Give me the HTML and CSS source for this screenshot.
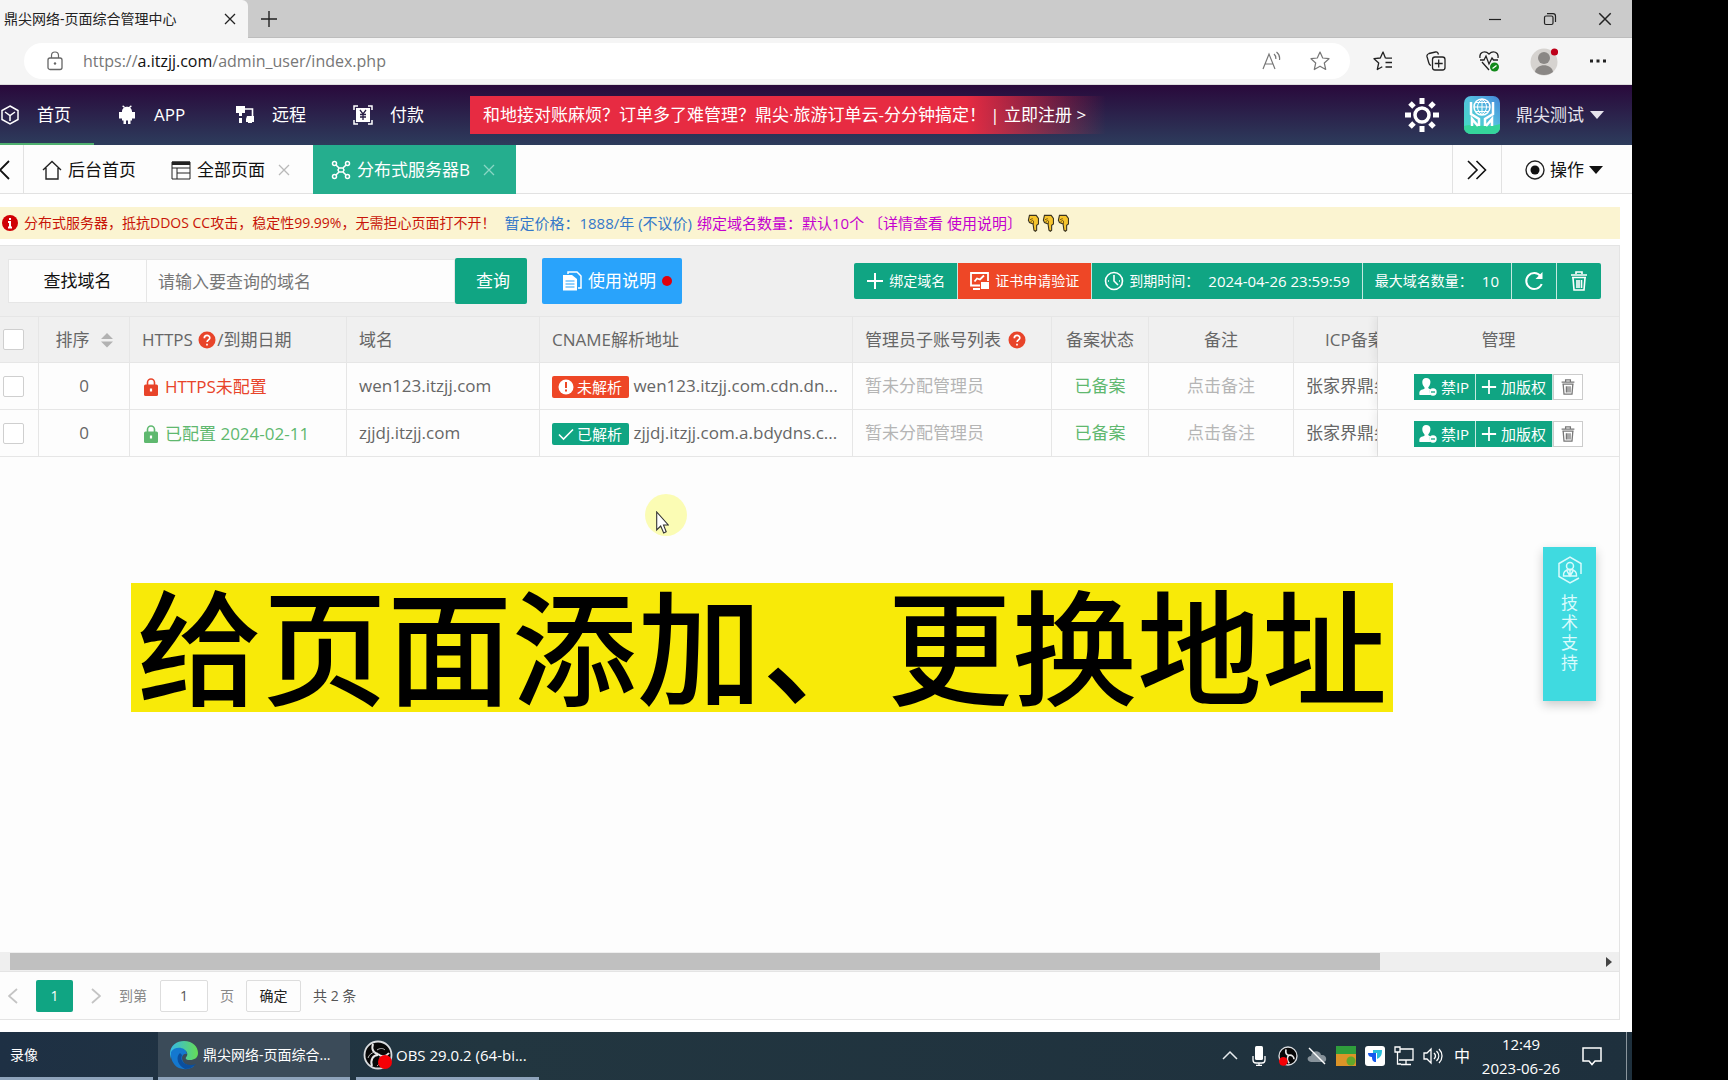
FILE: index.html
```html
<!DOCTYPE html>
<html lang="zh-CN">
<head>
<meta charset="utf-8">
<title>鼎尖网络-页面综合管理中心</title>
<link rel="stylesheet" href="styles.css">
</head>
<body>
<svg class="defs" aria-hidden="true">
  <symbol id="close" viewBox="0 0 14 14"><path d="M2 2l10 10M12 2L2 12" fill="none" stroke="currentColor" stroke-width="1.3"/></symbol>
  <symbol id="plus" viewBox="0 0 18 18"><path d="M9 1v16M1 9h16" fill="none" stroke="currentColor" stroke-width="2"/></symbol>
  <symbol id="trash" viewBox="0 0 20 20"><path d="M7 3V1h6v2M2 4h16M3 6.500h14M4 7l1 12h10l1-12M8 9v8M10 9v8M12.500 9v8" fill="none" stroke="currentColor" stroke-width="1.600"/></symbol>
  <symbol id="question" viewBox="0 0 18 18"><circle cx="9" cy="9" r="8.500" fill="#e8442a"/><path d="M6.300 7.200c0-3.700 5.500-3.500 5.500-.3 0 2-2.700 2-2.700 4.100M9 12.800v1.800" fill="none" stroke="#fff" stroke-width="1.700"/></symbol>
  <symbol id="lock" viewBox="0 0 14 20"><path d="M3.500 9V5.500a3.500 3.500 0 0 1 7 0V9" fill="none" stroke="currentColor" stroke-width="1.600"/><rect y="7.500" width="14" height="11.500" rx="1.500" fill="currentColor"/><path d="M7 11.500v3" stroke="#fff" stroke-width="2.200"/></symbol>
  <symbol id="user" viewBox="0 0 18 20"><path d="M7 1c6 0 5 6.500 2.500 9-.8 1 .2 1.800 1.700 2.300-1 1.700-.7 4 .5 5.700H.5C0 14 1 13 5 12c1-.5.800-1.500 0-2.300C2.500 7 2.500 1 7 1z" fill="currentColor"/><circle cx="14" cy="15" r="3.700" fill="currentColor"/><path d="M12 15h4" stroke="#10a583" stroke-width="1.300"/></symbol>
  <symbol id="hand" viewBox="0 0 13 20"><path d="M2 1.500h7.500L12 5v6l-2 1.500V18l-1.500 1.200L7 18l-1-7-4-1.500L.8 7z" fill="#f7c52d" stroke="#3a3320" stroke-width="1.200"/><path d="M2.500 6.500l3-1.500M3 9l3-2.500M6.500 11V7.500" fill="none" stroke="#6e5412" stroke-width="1"/></symbol>
  <symbol id="obs" viewBox="0 0 30 30"><circle cx="15" cy="15" r="13.500" fill="#070707" stroke="#d9dcdf" stroke-width="1.800"/><path d="M10 4c-2 6 1 9 5 10M15 15c-5 0-8 5-6 11M15 14c3 3 8 3 11-1" fill="none" stroke="#e6e6e6" stroke-width="2"/><path d="M14 10c3-2 6-2 8 0M12 12c-4 1-6 3-7 6M17 17c1 4 0 7-3 9" fill="none" stroke="#bbb" stroke-width="1"/><circle cx="22" cy="22" r="7" fill="#f50006"/></symbol>
</svg>
<div class="stage">
<div class="screen">

<header class="browser">
  <div class="titlebar">
    <div class="browser-tab"><span>鼎尖网络-页面综合管理中心</span><button aria-label="关闭标签页"><svg width="14" height="14"><use href="#close"/></svg></button></div>
    <button class="new-tab" aria-label="新建标签页"><svg width="18" height="18" viewBox="0 0 18 18"><path d="M9 1v16M1 9h16" fill="none" stroke="currentColor" stroke-width="1.400"/></svg></button>
    <div class="window-controls">
      <button aria-label="最小化"><svg width="14" height="14" viewBox="0 0 14 14"><path d="M1 7.500h12" stroke="#222" stroke-width="1.200"/></svg></button>
      <button aria-label="还原"><svg width="14" height="14" viewBox="0 0 14 14"><rect x="1.500" y="4" width="8.500" height="8.500" rx="1.500" fill="none" stroke="#222" stroke-width="1.200"/><path d="M4 1.700h6a2.500 2.500 0 0 1 2.500 2.500V10" fill="none" stroke="#222" stroke-width="1.200"/></svg></button>
      <button aria-label="关闭"><svg width="16" height="16"><use href="#close"/></svg></button>
    </div>
  </div>
  <div class="toolbar">
    <div class="address">
      <svg width="16" height="20" viewBox="0 0 16 20"><path d="M4.500 7V4.500a3.500 3.500 0 0 1 7 0V7" fill="none" stroke="#666" stroke-width="1.200"/><rect x="1" y="7" width="14" height="11.500" rx="2" fill="none" stroke="#666" stroke-width="1.300"/><circle cx="8" cy="12.500" r="1.200" fill="#666"/></svg>
      <p class="url">https://<b>a.itzjj.com</b>/admin_user/index.php</p>
      <button aria-label="朗读"><svg width="20" height="20" viewBox="0 0 20 20" fill="none" stroke="#777" stroke-width="1.200"><path d="M1 18L7 3l6 15M3.300 13h7.500M12 3c1.500 1.300 2 3 1.800 5M14.500 1c2.500 2 3.500 5 3 8"/></svg></button>
      <button aria-label="收藏"><svg width="20" height="20" viewBox="0 0 20 20" fill="none" stroke="#777" stroke-width="1.200" stroke-linejoin="round"><path d="M10 1l2.700 6 6.300.7-4.700 4.300 1.400 6.500L10 15.200 4.300 18.500 5.700 12 1 7.700 7.300 7z"/></svg></button>
    </div>
    <button aria-label="收藏夹"><svg width="20" height="20" viewBox="0 0 20 20" fill="none" stroke="#222" stroke-width="1.300" stroke-linejoin="round"><path d="M12.500 7.200L10 1 7.300 7 1 7.700 5.700 12 4.300 18.500l5-2.800M12.500 7.200H19M12.500 11.500H19M12.500 16H19"/></svg></button>
    <button aria-label="集锦"><svg width="20" height="20" viewBox="0 0 20 20" fill="none" stroke="#222" stroke-width="1.300"><rect x="6.500" y="6" width="12.500" height="13" rx="2.500"/><path d="M12.700 8.500v8M8.700 12.500h8M5 14.500c-1.500-.5-2-1.500-2.300-3L1 5.500C.7 4 1.500 3 3 2.500L9.500 1c1.500-.3 2.500.5 3 2.500"/></svg></button>
    <button aria-label="浏览器概要"><svg width="20" height="22" viewBox="0 0 20 22" fill="none" stroke="#222" stroke-width="1.300"><path d="M1 8C0 2 6 0 10 4c4-4 10-2 9 4M1 10h4l2-4 3 8 3-6 1.500 2H19M3 12l7 8"/><circle cx="15.500" cy="17" r="4.500" fill="#128a1a" stroke="none"/><path d="M13.500 18.500l4-3" stroke="#fff"/></svg></button>
    <button class="profile" aria-label="个人资料"><svg width="28" height="30" viewBox="0 0 28 30"><circle cx="14" cy="16" r="13.500" fill="#d6d3d0"/><circle cx="14" cy="12" r="6" fill="#8a8785"/><path d="M5 26c1-9 17-9 18 0-5 4-13 4-18 0z" fill="#8a8785"/><circle cx="24.500" cy="6" r="3.600" fill="#bd0019"/></svg></button>
    <button aria-label="更多"><svg width="18" height="4" viewBox="0 0 18 4"><path d="M1 .5h3v3H1zM7.500.5h3v3h-3zM14 .5h3v3h-3z" fill="#222"/></svg></button>
  </div>
</header>

<nav class="main-nav">
  <a class="current" href="#home"><svg width="20" height="20" viewBox="0 0 20 20" fill="none" stroke="#fff" stroke-width="1.500"><path d="M10 1l8 4.500v9L10 19l-8-4.500v-9zM5 7l5 3.500L15 7M10 10.500V16"/></svg>首页</a>
  <a href="#app"><svg width="20" height="20" viewBox="0 0 20 20" fill="#fff"><path d="M5 6.500c0-6.500 10-6.500 10 0zM5 6h10v9.500H5zM2 7h3v6.500H2zM15 7h3v6.500h-3zM6.500 15h2.500v4H6.500zM11 15h2.500v4H11zM5 1l2 2 1-1-1.500-1.500zM15 1l-2 2-1-1L13.500.5z"/></svg>APP</a>
  <a href="#remote"><svg width="20" height="20" viewBox="0 0 20 20"><path d="M1 1h9v7H7v3H4V8H1zM12 11h7v6h-2v1h-4v-1h-2v-3z" fill="#fff"/><path d="M10 4h7.500v7" fill="none" stroke="#fff" stroke-width="1.600"/><path d="M4 13h3v5H4z" fill="#fff"/></svg>远程</a>
  <a href="#pay"><svg width="20" height="20" viewBox="0 0 20 20"><rect x="3" y="3" width="14" height="14" fill="#fff"/><path d="M1 5V1h4M15 1h4v4M1 15v4h4M15 19h4v-4" fill="none" stroke="#fff" stroke-width="1.500"/><path d="M7 5l3 4 3-4M10 9v6M7 9.500h6M7 12h6" fill="none" stroke="#2a2048" stroke-width="1.300"/></svg>付款</a>
  <a class="promo" href="#promo">和地接对账麻烦？订单多了难管理？鼎尖·旅游订单云-分分钟搞定！ | 立即注册 &gt;</a>
  <div class="account">
    <button aria-label="主题"><svg width="36" height="36" viewBox="0 0 36 36" fill="none" stroke="#fff"><circle cx="18" cy="18" r="7" stroke-width="3.500"/><g stroke-width="5"><path d="M18 1v6M18 29v6M1 18h6M29 18h6M6 6l4 4M26 26l4 4M30 6l-4 4M10 26l-4 4"/></g></svg></button>
    <svg class="logo" width="36" height="38" viewBox="0 0 36 38"><defs><linearGradient id="lg" x1="0" x2="1" y1="1" y2="0"><stop stop-color="#41dfbd"/><stop offset=".55" stop-color="#55bfe0"/><stop offset="1" stop-color="#4586d8"/></linearGradient></defs><rect width="36" height="38" rx="7" fill="url(#lg)"/><path d="M0 30c10-3 20 3 36-2v4a7 6 0 0 1-7 6H7a7 6 0 0 1-7-6z" fill="#35d49b"/><g fill="none" stroke="#fff"><circle cx="18" cy="11" r="8" stroke-width="1.500"/><path d="M10 11h16M12 6.500h12M12 15.500h12M18 3v16M18 3c-6 5-6 11 0 16M18 3c6 5 6 11 0 16"/><path d="M7 6v12l8 5v7M29 6v12l-8 5v7M8 30v-7l6 7M28 30v-7l-6 7" stroke-width="2.500"/></g></svg>
    <button class="user-menu">鼎尖测试<i class="caret"></i></button>
  </div>
</nav>

<div class="page-tabs">
  <button class="scroll-left" aria-label="向左"><svg width="10" height="20" viewBox="0 0 10 20"><path d="M9 1L0 10l9 9" fill="none" stroke="#111" stroke-width="1.800"/></svg></button>
  <a href="#dash"><svg width="20" height="20" viewBox="0 0 20 20"><path d="M1 10l9-8.500 9 8.500M4 8v11h12V8" fill="none" stroke="#222" stroke-width="1.400"/></svg>后台首页</a>
  <a href="#pages"><svg width="20" height="20" viewBox="0 0 20 20"><path d="M1 2h18v17H1zM1 8h18M6 8v11M6 13h13" fill="none" stroke="#222" stroke-width="1"/><path d="M1 1.500h18v3.500H1z" fill="#222"/></svg>全部页面<svg class="tab-close" width="14" height="14"><use href="#close"/></svg></a>
  <a class="active" href="#servers"><svg width="20" height="20" viewBox="0 0 20 20" fill="none" stroke="#fff" stroke-width="1.500"><circle cx="3.500" cy="3.500" r="2"/><circle cx="16.500" cy="3.500" r="2"/><circle cx="3.500" cy="16.500" r="2"/><circle cx="16.500" cy="16.500" r="2"/><path d="M5 5l3 3h4l3-3M5 15l3-3h4l3 3M8 8l-1 2 1 2M12 8l1 2-1 2"/></svg>分布式服务器B<svg class="tab-close" width="14" height="14"><use href="#close"/></svg></a>
  <button class="scroll-right" aria-label="向右"><svg width="20" height="20" viewBox="0 0 20 20"><path d="M1 1l9 9-9 9M9.500 1l9 9-9 9" fill="none" stroke="#111" stroke-width="1.600"/></svg></button>
  <button class="actions"><svg width="20" height="20" viewBox="0 0 20 20"><circle cx="10" cy="10" r="9" fill="none" stroke="#222" stroke-width="1.400"/><circle cx="10" cy="10" r="4.500" fill="#111"/></svg>操作<i class="caret"></i></button>
</div>

<main>
  <p class="notice"><svg width="16" height="16" viewBox="0 0 16 16"><circle cx="8" cy="8" r="8" fill="#d00004"/><path d="M8 3v2M6 7h2v5M6 12.500h4" fill="none" stroke="#fff" stroke-width="2"/></svg><span class="warn">分布式服务器，抵抗DDOS CC攻击，稳定性99.99%，无需担心页面打不开！</span><span class="price">暂定价格：1888/年 (不议价)</span><span class="quota">绑定域名数量：默认10个 〔<a href="#detail">详情查看</a> <a href="#guide">使用说明</a>〕</span><svg width="44" height="18" viewBox="0 0 44 18"><use href="#hand" x="0" width="13" height="18"/><use href="#hand" x="15" width="13" height="18"/><use href="#hand" x="30" width="13" height="18"/></svg></p>

  <section class="card">
    <form class="filters">
      <label for="domain">查找域名</label><input id="domain" type="text" placeholder="请输入要查询的域名"><button class="search" type="button">查询</button>
      <button class="guide" type="button"><svg width="20" height="20" viewBox="0 0 20 20"><path d="M6 3V1h9l4 4v12h-3" fill="none" stroke="#fff" stroke-width="1.500"/><path d="M1 4h9l5 4v11.500H1z" fill="#fff"/><path d="M3.500 10h9M3.500 13h9M3.500 16h9" stroke="#29a3fb"/></svg>使用说明<i class="dot"></i></button>
      <div class="button-group">
        <button type="button"><svg width="18" height="18"><use href="#plus"/></svg>绑定域名</button>
        <button class="danger" type="button"><svg width="20" height="20" viewBox="0 0 20 20"><path d="M10 14.500H1V2h17v8M4.500 10.500L7 7.500l3 1 4-4M3 18h7" fill="none" stroke="#fff" stroke-width="1.800"/><path d="M11 11h8v7h-8z" fill="#fff"/></svg>证书申请验证</button>
        <button type="button"><svg width="20" height="20" viewBox="0 0 20 20" fill="none" stroke="#fff" stroke-width="1.600"><circle cx="10" cy="10" r="8.500"/><path d="M10 4v6l4 4M4 10h1M15 10h1" /></svg>到期时间：<span class="value">2024-04-26 23:59:59</span></button>
        <button type="button">最大域名数量：<span class="value">10</span></button>
        <button type="button" aria-label="刷新"><svg width="20" height="20" viewBox="0 0 20 20"><path d="M16.500 5a8 8 0 1 0 1.200 8" fill="none" stroke="#fff" stroke-width="2"/><path d="M18.500 1v7h-7z" fill="#fff"/></svg></button>
        <button type="button" aria-label="回收站"><svg width="20" height="20"><use href="#trash"/></svg></button>
      </div>
    </form>

    <table>
      <colgroup><col class="c-check"><col class="c-sort"><col class="c-https"><col class="c-domain"><col class="c-cname"><col class="c-admin"><col class="c-state"><col class="c-note"><col class="c-icp"><col class="c-manage"></colgroup>
      <thead><tr>
        <th><input type="checkbox" aria-label="全选"></th>
        <th class="center"><span class="cell sort">排序<svg width="12" height="16" viewBox="0 0 12 16"><path d="M0 7l6-6 6 6zM0 9.500h12l-6 6z" fill="#b2b2b2"/></svg></span></th>
        <th><span class="cell tight">HTTPS&nbsp;<svg width="18" height="18"><use href="#question"/></svg>/到期日期</span></th>
        <th>域名</th><th>CNAME解析地址</th>
        <th><span class="cell">管理员子账号列表<svg width="18" height="18"><use href="#question"/></svg></span></th>
        <th class="center">备案状态</th><th class="center">备注</th><th class="icp-head">ICP备案</th><th class="center fixed">管理</th>
      </tr></thead>
      <tbody>
      <tr>
        <td><input type="checkbox" aria-label="选择 wen123.itzjj.com"></td><td class="center">0</td>
        <td><span class="cell red"><svg width="14" height="20"><use href="#lock"/></svg>HTTPS未配置</span></td>
        <td>wen123.itzjj.com</td>
        <td class="cname"><span class="badge bad"><svg width="16" height="16" viewBox="0 0 16 16"><circle cx="8" cy="8" r="7.500" fill="#fff"/><path d="M8 3v6M8 10.500v2" stroke="#ee4726" stroke-width="2"/></svg>未解析</span> wen123.itzjj.com.cdn.dn...</td>
        <td class="muted">暂未分配管理员</td><td class="center green">已备案</td><td class="center muted">点击备注</td><td class="icp">张家界鼎尖</td>
        <td class="center fixed"><div class="row-actions"><button><svg width="18" height="20"><use href="#user"/></svg>禁IP</button><button><svg width="16" height="16"><use href="#plus"/></svg>加版权</button><button class="del" aria-label="删除"><svg width="16" height="18"><use href="#trash"/></svg></button></div></td>
      </tr>
      <tr>
        <td><input type="checkbox" aria-label="选择 zjjdj.itzjj.com"></td><td class="center">0</td>
        <td><span class="cell green"><svg width="14" height="20"><use href="#lock"/></svg>已配置 2024-02-11</span></td>
        <td>zjjdj.itzjj.com</td>
        <td class="cname"><span class="badge good"><svg width="16" height="16" viewBox="0 0 16 16"><path d="M1 8.500l4.500 4.500L15 3.500" fill="none" stroke="#fff" stroke-width="1.600"/></svg>已解析</span> zjjdj.itzjj.com.a.bdydns.c...</td>
        <td class="muted">暂未分配管理员</td><td class="center green">已备案</td><td class="center muted">点击备注</td><td class="icp">张家界鼎尖</td>
        <td class="center fixed"><div class="row-actions"><button><svg width="18" height="20"><use href="#user"/></svg>禁IP</button><button><svg width="16" height="16"><use href="#plus"/></svg>加版权</button><button class="del" aria-label="删除"><svg width="16" height="18"><use href="#trash"/></svg></button></div></td>
      </tr>
      </tbody>
    </table>

    <div class="hscroll"><i class="thumb"></i><i class="arrow"></i></div>
    <div class="pager">
      <button class="step" aria-label="上一页"><svg width="10" height="16" viewBox="0 0 10 16"><path d="M9 1L1 8l8 7" fill="none" stroke="#c4c4c4" stroke-width="1.800"/></svg></button>
      <button class="page">1</button>
      <button class="step" aria-label="下一页"><svg width="10" height="16" viewBox="0 0 10 16"><path d="M1 1l8 7-8 7" fill="none" stroke="#c4c4c4" stroke-width="1.800"/></svg></button>
      <label for="goto">到第</label><input id="goto" type="text" value="1"><span>页</span><button class="confirm">确定</button><span class="total">共 2 条</span>
    </div>
  </section>
</main>

<footer class="taskbar">
  <button class="task first">录像</button>
  <button class="task focus"><svg width="28" height="30" viewBox="0 0 28 30"><defs><linearGradient id="eg" x1="0" x2="1"><stop stop-color="#35b8e8"/><stop offset="1" stop-color="#65dc55"/></linearGradient></defs><path d="M0 14C0 5 7 1 14 1c9 0 14 6 14 12 0 5-4 7-8 7-5 0-5-2-3-4 2-5-5-8-9-6-4 1-7 5-7 9z" fill="url(#eg)"/><path d="M1 12c3-6 15-6 16 2-7-2-8 13 7 12-4 4-12 4-17 1-4-3-7-9-6-15z" fill="#1478cf"/><path d="M10 13c-5 4-2 13 5 16 5 0 8-2 11-5-9 3-17-2-14-9z" fill="#0b4f9e"/></svg>鼎尖网络-页面综合...</button>
  <button class="task obs"><svg width="30" height="30"><use href="#obs"/></svg>OBS 29.0.2 (64-bi...</button>
  <div class="tray">
    <svg width="20" height="20" viewBox="0 0 20 20"><path d="M3 13l7-7 7 7" fill="none" stroke="#e8ecef" stroke-width="1.500"/></svg>
    <svg width="20" height="20" viewBox="0 0 20 20"><rect x="6" y="0" width="8" height="14" rx="1.500" fill="#fff"/><path d="M4 10v4c0 2 1 3 3 3h6c2 0 3-1 3-3v-4M10 17v2.500M7 19.300h6" fill="none" stroke="#fff" stroke-width="1.300"/></svg>
    <svg width="20" height="20" viewBox="0 0 30 30"><circle cx="15" cy="15" r="13.500" fill="#070707" stroke="#d9dcdf" stroke-width="2"/><path d="M12 5c-1 5 0 8 4 9M16 14c5-1 8 2 8 6M16 14c-3 4-2 9 1 12" fill="none" stroke="#e6e6e6" stroke-width="2.500"/><circle cx="8" cy="23" r="6.500" fill="#f50006"/></svg>
    <svg width="20" height="20" viewBox="0 0 20 20"><path d="M4 16c-5-1-4-6 0-6 1-6 9-6 10-1 6-1 7 7 2 7z" fill="#87929a"/><path d="M2 2l16 16" stroke="#fff" stroke-width="1.400"/></svg>
    <svg width="20" height="20" viewBox="0 0 20 20"><path d="M0 0h20v9H0z" fill="#2f9e3c"/><path d="M0 8h20v12H0z" fill="#dc9428"/><circle cx="15" cy="15" r="4.500" fill="#63a72b"/></svg>
    <svg width="20" height="20" viewBox="0 0 20 20"><rect width="20" height="20" rx="3" fill="#fff"/><path d="M3 7h8v9c-3 0-4-2-4-5-2 0-4-1-4-4z" fill="#1559ee"/><path d="M8 4h9c0 5-1 7-5 9V7H8z" fill="#28bedb"/></svg>
    <svg width="20" height="20" viewBox="0 0 20 20" fill="none" stroke="#fff" stroke-width="1.300"><path d="M6 3h13v11H5M12 14v4M7 18.500h10M1 1h5v5H1zM3.500 6v12H7"/></svg>
    <svg width="20" height="20" viewBox="0 0 20 20" fill="none" stroke="#fff" stroke-width="1.300"><path d="M1 7h3l4-4v14l-4-4H1zM11 7c2 2 2 4 0 6M13.500 5c3 3 3 7 0 10M16 3c4 4 4 10 0 14"/></svg>
    <span class="ime">中</span>
  </div>
  <time class="clock"><span>12:49</span><span>2023-06-26</span></time>
  <button class="notify" aria-label="通知"><svg width="20" height="20" viewBox="0 0 20 20"><path d="M1 2h18v13h-6l-3 3.500L7 15H1z" fill="none" stroke="#fff" stroke-width="1.500"/></svg></button>
</footer>

<button class="support"><svg width="26" height="28" viewBox="0 0 26 28" fill="none" stroke="#d9fbfc" stroke-width="1.500"><path d="M24 18V7.500L13 1 2 7.500v13L13 27l9-5"/><circle cx="13" cy="10" r="3.500"/><path d="M13 13.500c-5 0-7 3-6.500 6.500h13c.5-3.500-1.500-6.500-6.500-6.500zM13 14v5M10 15l3 5 3-5"/></svg><span>技术支持</span></button>
<i class="pointer-glow"></i>
<svg class="pointer" width="13" height="23" viewBox="0 0 13 23"><path d="M.7 1v18l4-4 3 7 2.500-1.200L7.500 14h4.800z" fill="#fff" stroke="#333" stroke-width="1.100"/></svg>
<div class="caption">给页面添加、更换地址</div>
</div>
</div>
</body>
</html>
```
FILE: styles.css
```css
* { box-sizing: border-box; }
body { margin: 0; background: #000; color: #666; font: 16px/24px "Open Sans", "Noto Sans CJK SC", sans-serif; }
p { margin: 0; }
a { color: inherit; text-decoration: none; }
button, input { font: inherit; color: inherit; margin: 0; }
button { display: flex; align-items: center; justify-content: center; border: 0; padding: 0; background: none; white-space: nowrap; }
svg { display: block; flex: none; }
.defs { position: absolute; width: 0; height: 0; }
.caret { border: 7px solid transparent; border-top: 8px solid currentColor; border-bottom: 0; }

/* the right eighteenth of the window is left dark */
.stage { display: grid; grid-template-columns: 17fr 1fr; min-height: 100vh; }
.screen { position: relative; display: flex; flex-direction: column; min-width: 0; overflow: hidden; background: #fff; }

/* browser chrome */
.titlebar { display: flex; height: 38px; background: #cbcbcb; border-bottom: 1px solid #bdbdbd; color: #222; font-size: 14px; }
.browser-tab { display: flex; align-items: center; justify-content: space-between; width: 248px; height: 38px; padding: 0 11px 0 4px; background: #f5f5f5; border-radius: 0 6px 0 0; }
.new-tab { width: 42px; }
.window-controls { display: flex; margin-left: auto; }
.window-controls button { width: 55px; }
.toolbar { display: flex; align-items: center; gap: 33px; height: 47px; padding: 0 25px 0 24px; background: #f5f5f5; border-bottom: 1px solid #ddd; }
.address { display: flex; flex: 1; align-items: center; gap: 20px; height: 36px; padding: 0 20px 0 23px; margin-right: -10px; background: #fff; border-radius: 18px; }
.address button + button { margin-left: 8px; }
.url { flex: 1; color: #777; font-size: 16px; }
.url b { color: #111; font-weight: 400; }
.profile { margin: 0 -2px; }

/* application header */
.main-nav { display: flex; align-items: center; height: 60px; background: linear-gradient(#29093b, #2d3c5c); color: #fff; font-size: 17px; }
.main-nav > a:not(.promo) { display: flex; align-items: center; gap: 17px; height: 60px; min-width: 118px; padding: 0 23px; }
.main-nav > a.current:not(.promo) { min-width: 94px; padding-left: 0; box-shadow: inset 0 -2px #4fb06f; }
.promo { height: 38px; margin-left: 22px; padding: 0 20px 0 13px; line-height: 38px; white-space: nowrap; background: linear-gradient(90deg, #e72b42 78%, rgba(231, 43, 66, 0)); }
.account { display: flex; align-items: center; margin-left: auto; padding-right: 28px; }
.logo { margin: 0 16px 0 24px; }
.user-menu { gap: 6px; color: #e6e3ec; }

/* open pages */
.page-tabs { display: flex; height: 49px; background: #fdfdfd; box-shadow: inset 0 -1px #e2e2e2; color: #111; font-size: 17px; }
.page-tabs a { display: flex; align-items: center; gap: 6px; padding: 0 17px 0 18px; white-space: nowrap; }
.page-tabs a:nth-of-type(n+2) { padding-right: 22px; }
.page-tabs a.active:nth-of-type(n) { padding-right: 20px; background: #25ae8e; color: #fff; }
.tab-close { margin-left: 6px; color: #b9b9b9; }
.active .tab-close { color: #8ad6c4; }
.scroll-left { width: 24px; justify-content: flex-start; border-right: 1px solid #e2e2e2; }
.scroll-right { width: 50px; margin-left: auto; border: 1px solid #e2e2e2; border-width: 0 1px; }
.actions { gap: 5px; padding: 0 29px 0 23px; }

/* notice */
main { display: flex; flex: 1; flex-direction: column; padding: 13px 12px 12px 0; }
.notice { display: flex; align-items: center; gap: 5px; height: 32px; margin-bottom: 6px; padding-left: 2px; background: #fbf4d1; font-size: 15px; white-space: nowrap; }
.warn { margin: 0 4px 0 1px; color: #c81408; font-size: 14px; }
.price { color: #3478c9; }
.quota { color: #c400cf; }

.card { display: flex; flex: 1; flex-direction: column; border: 1px solid #e4e4e4; border-left: 0; background: #fdfdfd; }
.filters { display: flex; align-items: center; height: 70px; padding: 0 18px 0 8px; background: #efefef; font-size: 17px; }
.filters label, .filters input { height: 44px; border: 1px solid #e6e6e6; background: #fdfdfd; }
.filters label { width: 138px; border-right: 0; color: #111; line-height: 42px; text-align: center; }
.filters input { width: 309px; padding: 0 11px; border-radius: 0; }
.filters input::placeholder { color: #777; opacity: 1; }
.search, .guide { height: 46px; border-radius: 2px; color: #fff; }
.search { width: 72px; padding-left: 4px; background: #10a583; }
.guide { width: 140px; gap: 6px; margin-left: 15px; padding-left: 10px; background: #29a3fb; }
.dot { width: 10px; height: 10px; border-radius: 50%; background: #e0000d; }
.button-group { display: flex; margin-left: auto; height: 36px; font-size: 14px; color: #fff; }
.button-group button { gap: 5px; padding: 0 12px; border-right: 1px solid #c5e9e0; background: #10a583; }
.button-group button:last-child { border-right: 0; border-radius: 0 2px 2px 0; }
.button-group button:first-child { border-radius: 2px 0 0 2px; }
.button-group .danger { background: #ee4726; }
.value { padding-left: 4px; font-size: 15px; }

/* domain table */
table { width: 100%; border-collapse: separate; border-spacing: 0; table-layout: fixed; }
.c-check { width: 39px; } .c-sort { width: 91px; } .c-https { width: 217px; } .c-domain { width: 193px; }
.c-admin { width: 199px; } .c-state { width: 97px; } .c-note { width: 145px; } .c-icp { width: 84px; } .c-manage { width: 241px; }
th, td { height: 47px; padding: 0 12px; overflow: hidden; border: 1px solid #e6e6e6; border-width: 0 1px 1px 0; color: #666; font-size: 17px; font-weight: 400; text-align: left; white-space: nowrap; }
th { border-top-width: 1px; background: #f0f0f0; }
th:first-child, td:first-child { padding: 0 3px; }
th.center, td.center { padding: 0; text-align: center; }
.cell { display: inline-flex; align-items: center; gap: 7px; vertical-align: middle; }
.cell.tight { gap: 1px; }
.cell.sort { gap: 11px; }
td.muted { color: #b5b5b5; }
td.green, .cell.green { color: #5fb86f; }
.cell.red { color: #e8442a; }
.cell.red, .cell.green { padding-left: 2px; }
td.cname { padding-right: 0; }
th.icp-head { padding: 0 0 0 31px; }
td.icp { padding-right: 0; }
.fixed { position: relative; overflow: visible; border-right: 0; background: #fdfdfd; box-shadow: -4px 0 8px rgba(0, 0, 0, .06); clip-path: inset(0 0 0 -12px); }
th.fixed { background: #f0f0f0; }
table input { display: block; width: 21px; height: 21px; appearance: none; border: 1px solid #cfcfcf; border-radius: 2px; background: #fff; }
.badge { display: inline-flex; align-items: center; gap: 3px; height: 22px; padding: 0 7px 0 6px; border-radius: 2px; color: #fff; font-size: 15px; vertical-align: middle; }
.bad { background: #ee4726; }
.good { background: #10a583; }
.row-actions { display: flex; justify-content: center; padding-top: 2px; font-size: 15px; color: #fff; }
.row-actions button { gap: 4px; height: 26px; padding: 0 6px 0 5px; border-right: 1px solid #c5e9e0; background: #10a583; }
.row-actions .del { width: 30px; border: 1px solid #ccc; background: #fff; color: #777; }

.hscroll { display: flex; align-items: center; height: 20px; margin-top: auto; padding: 0 7px 0 10px; border-bottom: 1px solid #e4e4e4; background: #efefef; }
.thumb { flex: 0 0 85.5%; height: 17px; background: #c0c0c0; }
.arrow { margin-left: auto; border: 5px solid transparent; border-left: 6px solid #444; border-right: 0; }
.pager { display: flex; align-items: center; height: 47px; padding-left: 8px; color: #888; font-size: 14px; }
.page { width: 37px; height: 32px; margin: 0 18px; border-radius: 2px; background: #10a583; color: #fff; }
.pager label { margin: 0 13px 0 18px; }
.pager input { width: 48px; height: 32px; margin-right: 12px; border: 1px solid #ddd; border-radius: 2px; background: #fff; color: #555; text-align: center; }
.confirm { width: 55px; height: 32px; margin: 0 12px; border: 1px solid #ddd; border-radius: 2px; color: #222; }
.total { color: #555; }

/* taskbar */
.taskbar { display: flex; height: 48px; padding-right: 5px; background: linear-gradient(90deg, #1e3044, #223640 30%, #1e303d); color: #fff; font-size: 14px; }
.task { justify-content: flex-start; gap: 5px; height: 48px; border-bottom: 3px solid #8ea3bb; }
.first { width: 153px; margin-right: 5px; padding-left: 10px; }
.focus { width: 192px; margin-right: 6px; padding-left: 12px; background: #3b4b59; }
.obs { width: 183px; padding-left: 7px; gap: 3px; font-size: 15px; }
.tray { display: flex; align-items: center; gap: 9px; margin-left: auto; }
.ime { width: 20px; font-size: 16px; text-align: center; }
.clock { display: flex; flex-direction: column; justify-content: center; width: 98px; text-align: center; font-size: 15px; }
.notify { width: 57px; padding-right: 12px; border-right: 1px solid #8a959d; }

/* layers above the page */
.support { position: absolute; top: 547px; right: 36px; flex-direction: column; justify-content: flex-start; gap: 9px; width: 53px; height: 154px; padding-top: 9px; background: #3fdae0; box-shadow: 0 4px 10px rgba(0, 0, 0, .2); color: #d9fbfc; font-size: 17px; line-height: 20px; }
.support span { width: 18px; white-space: normal; }
.caption { position: absolute; top: 583px; left: 131px; padding: 0 6px; background: #f8ea08; color: #000; font-size: 125px; font-weight: 500; line-height: 129px; white-space: nowrap; }
.pointer-glow { position: absolute; top: 494px; left: 645px; width: 42px; height: 42px; border-radius: 50%; background: #fbfcb4; }
.pointer { position: absolute; top: 511px; left: 656px; }
```
